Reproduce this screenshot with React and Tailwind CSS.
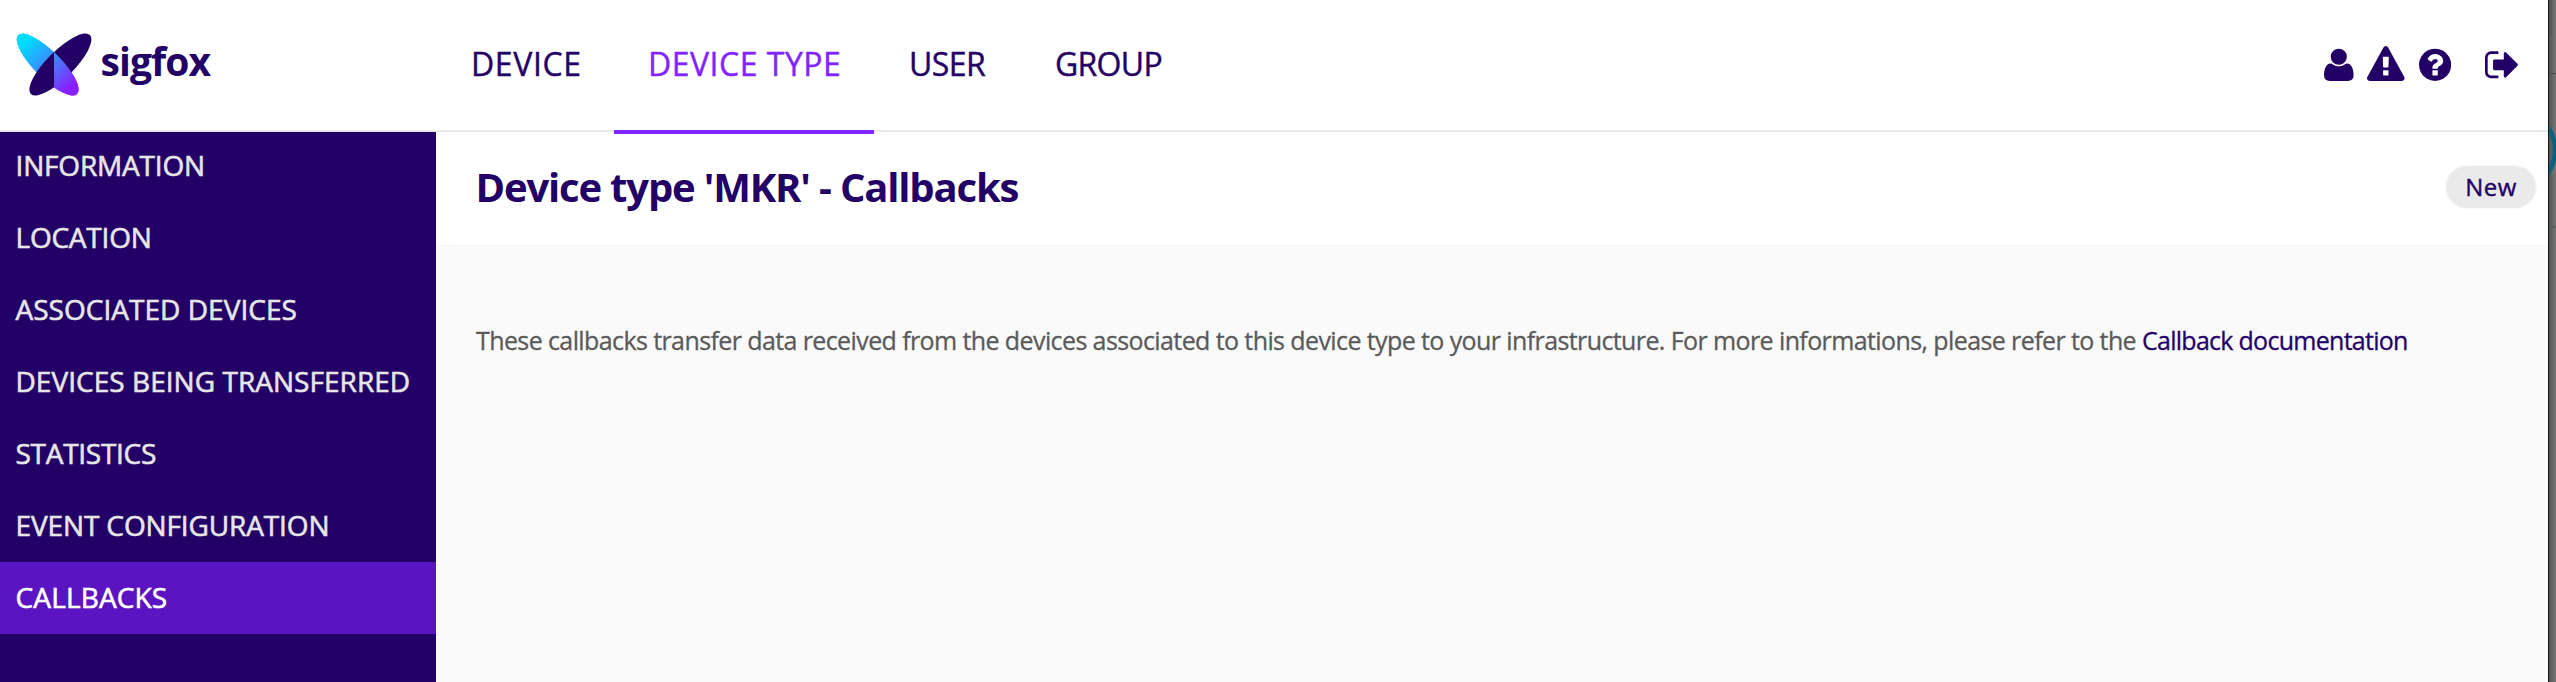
const nav = [
  { label: "DEVICE", box: "w-[178px] pl-[35px]", track: "tracking-[0.6px]" },
  { label: "DEVICE TYPE", box: "w-[260px] pl-[34px]", track: "tracking-[0.5px]", active: true },
  { label: "USER", box: "w-[147px] pl-[35px]", track: "tracking-[-0.55px]" },
  { label: "GROUP", box: "w-[177px] pl-[34px]", track: "tracking-[-0.7px]" },
];

const menu = [
  { label: "INFORMATION", track: "tracking-[-0.18px]" },
  { label: "LOCATION", track: "tracking-[-0.22px]" },
  { label: "ASSOCIATED DEVICES", track: "tracking-[0.03px]" },
  { label: "DEVICES BEING TRANSFERRED", track: "tracking-[0.04px]" },
  { label: "STATISTICS", track: "tracking-[-0.28px]" },
  { label: "EVENT CONFIGURATION", track: "tracking-[-0.12px]" },
  { label: "CALLBACKS", track: "tracking-[0.15px]", active: true },
];

function Logo() {
  return (
    <div className="flex items-center w-[436px] h-[130px] pl-4">
      <svg width="76" height="63" viewBox="16 33.5 76 63" className="mb-px shrink-0">
        <defs>
          <linearGradient id="wing" gradientUnits="userSpaceOnUse" x1="16.6" y1="0" x2="79" y2="0">
            <stop offset="0" stopColor="#00dcff" />
            <stop offset="0.6" stopColor="#4a74ff" />
            <stop offset="1" stopColor="#8a1fff" />
          </linearGradient>
          <clipPath id="rightHalf">
            <rect x="54" y="30" width="40" height="70" />
          </clipPath>
        </defs>
        <ellipse cx="47.6" cy="65" rx="41.7" ry="13.5" transform="rotate(45 47.6 65)" fill="url(#wing)" />
        <ellipse cx="60.4" cy="65" rx="41.7" ry="13.5" transform="rotate(-45 60.4 65)" fill="#230066" />
        <g clipPath="url(#rightHalf)">
          <ellipse cx="47.6" cy="65" rx="41.7" ry="13.5" transform="rotate(45 47.6 65)" fill="url(#wing)" />
        </g>
      </svg>
      <span className="ml-[8.5px] pb-[9px] text-[39px] leading-[48px] font-bold tracking-[-0.9px]">sigfox</span>
    </div>
  );
}

function HeaderIcons() {
  return (
    <div className="ml-auto mr-[30px] flex h-[130px] items-center pb-px">
      <svg width="29.6" height="37.6" viewBox="0 -1536 1408 1792" fill="currentColor">
        <path transform="scale(1 -1)" d="M1408 131q0 -120 -73 -189.500t-194 -69.500h-874q-121 0 -194 69.500t-73 189.500q0 53 3.500 103.500t14 109t26.500 108.500t43 97.500t62 81t85.500 53.500t111.500 20q9 0 42 -21.500t74.500 -48t108 -48t133.500 -21.500t133.500 21.500t108 48t74.500 48t42 21.500q61 0 111.500 -20t85.500 -53.500t62 -81t43 -97.500t26.500 -108.500t14 -109t3.500 -103.500zM1088 1024q0 -159 -112.500 -271.500t-271.500 -112.500t-271.500 112.500t-112.500 271.500t112.500 271.500t271.500 112.500t271.500 -112.500t112.500 -271.500z" />
      </svg>
      <svg className="ml-[13.2px]" width="37.6" height="37.6" viewBox="0 0 1792 1792" fill="currentColor">
        <path d="M1024 1375v-190q0-14-9.500-23.500t-22.500-9.500h-192q-13 0-22.500 9.500t-9.500 23.500v190q0 14 9.500 23.500t22.500 9.500h192q13 0 22.500-9.500t9.500-23.500zm-2-374l18-459q0-12-10-19-13-11-24-11h-220q-11 0-24 11-10 7-10 21l17 457q0 10 10 16.500t24 6.500h185q14 0 23.500-6.500t10.500-16.500zm-14-934l768 1408q35 63-2 126-17 29-46.500 46t-63.500 17h-1536q-34 0-63.500-17t-46.500-46q-37-63-2-126l768-1408q17-31 47-49t65-18 65 18 47 49z" />
      </svg>
      <svg className="ml-[14.3px]" width="32.2" height="37.6" viewBox="128 0 1536 1792" fill="currentColor">
        <path d="M1024 1376v-192q0-14-9-23t-23-9h-192q-14 0-23 9t-9 23v192q0 14 9 23t23 9h192q14 0 23-9t9-23zm256-672q0-88-55.500-163t-138.500-116-170-41q-243 0-371 213-15 24 8 42l132 100q7 6 19 6 16 0 25-12 53-68 86-92 34-24 86-24 48 0 85.500 26t37.500 59q0 38-20 61t-68 45q-63 28-115.500 86.500t-52.500 125.500v36q0 14 9 23t23 9h192q14 0 23-9t9-23q0-19 21.500-49.500t54.500-49.500q32-18 49-28.500t46-35 44.500-48 28-60.500 12.500-81zm384 192q0 209-103 385.500t-279.500 279.500-385.500 103-385.500-103-279.500-279.500-103-385.500 103-385.500 279.500-279.500 385.500-103 385.500 103 279.500 279.500 103 385.500z" />
      </svg>
      <svg className="ml-[34px]" width="32.9" height="37.6" viewBox="64 0 1568 1792" fill="currentColor">
        <path d="M704 1440q0 4 1 20t.5 26.500-3 23.500-10 19.500-20.500 6.500h-320q-119 0-203.500-84.500t-84.500-203.500v-704q0-119 84.500-203.500t203.500-84.500h320q13 0 22.500 9.500t9.500 22.500q0 4 1 20t.5 26.500-3 23.500-10 19.500-20.500 6.500h-320q-66 0-113 47t-47 113v704q0 66 47 113t113 47h312l11.500 1 11.500 3 8 5.500 7 9 2 13.500zm928-544q0 26-19 45l-544 544q-19 19-45 19t-45-19-19-45v-288h-448q-26 0-45-19t-19-45v-384q0-26 19-45t45-19h448v-288q0-26 19-45t45-19 45 19l544 544q19 19 19 45z" />
      </svg>
    </div>
  );
}

export default function App() {
  return (
    <div className="flex h-[682px] w-[2556px] overflow-hidden bg-white font-['Open_Sans','Noto_Sans',sans-serif] text-[#230066]">
      <div className="flex w-[2548px] shrink-0 flex-col">
        <header className="flex h-[132px] shrink-0 border-b-2 border-[#eaeaea]">
          <Logo />
          <nav className="flex text-[32px] leading-[44px] [-webkit-text-stroke:0.4px_currentColor]">
            {nav.map((n) => (
              <a
                key={n.label}
                className={`relative flex h-[134px] items-center whitespace-nowrap ${n.box} ${n.track} ${
                  n.active ? "border-b-4 border-[#8224ff] pb-[2px] text-[#8224ff]" : "pb-[6px]"
                }`}
              >
                {n.label}
              </a>
            ))}
          </nav>
          <HeaderIcons />
        </header>
        <div className="flex flex-1">
          <aside className="w-[436px] shrink-0 bg-[#230066] text-[28px] font-medium [-webkit-text-stroke:0.6px_currentColor]">
            {menu.map((m) => (
              <a
                key={m.label}
                className={`flex h-[72px] items-center whitespace-nowrap pb-[2px] pl-[15.5px] first:h-[70px] first:pb-[4px] ${m.track} ${
                  m.active ? "bg-[#5a14c1] text-white" : "text-[#e6e6e6]"
                }`}
              >
                {m.label}
              </a>
            ))}
          </aside>
          <main className="flex flex-1 flex-col bg-[#fafafa]">
            <div className="flex h-[112px] items-center justify-between bg-white pl-[39.5px] pr-[11px]">
              <h1 className="pb-[2px] text-[40px] font-bold leading-[54px] tracking-[-1.17px]">Device type 'MKR' - Callbacks</h1>
              <button className="mb-[2px] flex h-[44px] w-[92px] items-center justify-center rounded-full border border-[#f8f8f8] bg-[#eaeaea] bg-clip-padding pb-px text-[24px] tracking-[0.38px] [-webkit-text-stroke:0.4px_currentColor]">
                New
              </button>
            </div>
            <p className="mt-[79px] whitespace-nowrap pl-[40px] text-[25px] leading-[34px] tracking-[-0.6px] text-[#5a5a5a] [-webkit-text-stroke:0.3px_currentColor]">
              These callbacks transfer data received from the devices associated to this device type to your infrastructure. For more
              informations, please refer to the <a className="font-medium tracking-[-0.72px] text-[#230066]">Callback documentation</a>
            </p>
          </main>
        </div>
      </div>
      <svg width="8" height="682" viewBox="2548 0 8 682" className="shrink-0">
        <defs>
          <linearGradient id="edge" x1="0" y1="0" x2="1" y2="0">
            <stop offset="0" stopColor="#4c4c4c" />
            <stop offset="0.5" stopColor="#646464" />
            <stop offset="1" stopColor="#757575" />
          </linearGradient>
        </defs>
        <rect x="2548" y="0" width="8" height="682" fill="url(#edge)" />
        <rect x="2548" y="73" width="8" height="1" fill="#4a4a4a" />
        <rect x="2548" y="226" width="8" height="2" fill="#56605f" />
        <path d="M2551 0V34Q2551 37 2548 38" fill="none" stroke="#505050" />
        <circle cx="2515" cy="150" r="40" fill="none" stroke="#0b5f7e" strokeWidth="4.500" />
        <rect x="2548" y="0" width="1" height="682" fill="#151515" />
      </svg>
    </div>
  );
}
